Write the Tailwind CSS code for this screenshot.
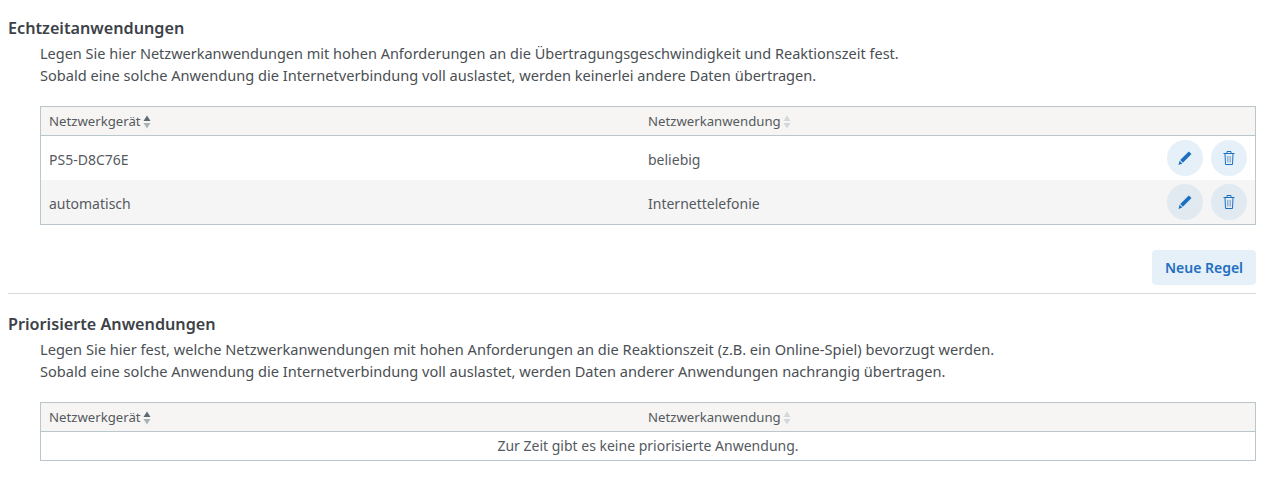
<!DOCTYPE html>
<html lang="de">
<head>
  <meta charset="UTF-8" />
  <title>Priorisierung</title>
  <script src="https://cdn.jsdelivr.net/npm/@tailwindcss/browser@4"></script>
</head>
<body class="bg-white text-[#555a5f] font-['Noto_Sans',sans-serif] text-[14px] overflow-hidden">
  <main class="w-[1276px] pl-2 pr-5 pt-[17px]">

    <!-- Echtzeitanwendungen -->
    <h2 class="h-[22px] leading-[22px] text-[16.2px] font-semibold text-[#3c4248]">Echtzeitanwendungen</h2>
    <div class="pl-8 pt-[3px] leading-[22px] text-[14.6px] text-[#4a4f54]">
      <p class="text-[14.5px]">Legen Sie hier Netzwerkanwendungen mit hohen Anforderungen an die Übertragungsgeschwindigkeit und Reaktionszeit fest.</p>
      <p>Sobald eine solche Anwendung die Internetverbindung voll auslastet, werden keinerlei andere Daten übertragen.</p>
    </div>

    <div class="ml-8 mt-[20px] border border-[#b9c6ce]">
      <div class="flex h-[29px] pt-[2px] items-center bg-[#f6f5f3] border-b border-[#b9c6ce] text-[13.2px]">
        <div class="w-[607px] pl-2 flex items-center gap-0.5">Netzwerkgerät
          <svg width="8" height="16" viewBox="0 0 8 16"><path d="M4 1.5l3.5 5.5h-7z" fill="#5f6871"/><path d="M4 14.5L7.5 9h-7z" fill="#a9b3ba"/></svg>
        </div>
        <div class="flex items-center gap-0.5">Netzwerkanwendung
          <svg width="8" height="16" viewBox="0 0 8 16"><path d="M4 1.5l3.5 5.5h-7z" fill="#d3d8dc"/><path d="M4 14.5L7.5 9h-7z" fill="#d3d8dc"/></svg>
        </div>
      </div>
      <div class="flex h-[44px] items-center">
        <div class="w-[607px] pl-2 pt-[2px]">PS5-D8C76E</div>
        <div class="flex-1 pt-[2px]">beliebig</div>
        <div class="flex gap-2 pr-2">
          <button class="w-9 h-9 rounded-full bg-[#e6f0f8] flex items-center justify-center">
            <svg width="14" height="15" viewBox="0 0 14 15"><path d="M10.8.5l2.7 2.6-8.6 8.7-2.7-2.7z M1.6 9.7l2.7 2.7L.5 14z" fill="#1e6fc0"/></svg>
          </button>
          <button class="w-9 h-9 rounded-full bg-[#e6f0f8] flex items-center justify-center">
            <svg width="14" height="16" viewBox="0 0 14 16" fill="none" stroke="#1e6fc0"><path d="M1.5 3.5h11M5 3.5V1.5h4v2M3 3.5l.5 11h7l.5-11"/><path d="M5.5 6v6.5M7 6v6.5M8.5 6v6.5" stroke="#8fb4da"/></svg>
          </button>
        </div>
      </div>
      <div class="flex h-[44px] items-center bg-[#f5f5f5]">
        <div class="w-[607px] pl-2 pt-[2px]">automatisch</div>
        <div class="flex-1 pt-[2px]">Internettelefonie</div>
        <div class="flex gap-2 pr-2">
          <button class="w-9 h-9 rounded-full bg-[#e1eaf1] flex items-center justify-center">
            <svg width="14" height="15" viewBox="0 0 14 15"><path d="M10.8.5l2.7 2.6-8.6 8.7-2.7-2.7z M1.6 9.7l2.7 2.7L.5 14z" fill="#1e6fc0"/></svg>
          </button>
          <button class="w-9 h-9 rounded-full bg-[#e1eaf1] flex items-center justify-center">
            <svg width="14" height="16" viewBox="0 0 14 16" fill="none" stroke="#1e6fc0"><path d="M1.5 3.5h11M5 3.5V1.5h4v2M3 3.5l.5 11h7l.5-11"/><path d="M5.5 6v6.5M7 6v6.5M8.5 6v6.5" stroke="#8fb4da"/></svg>
          </button>
        </div>
      </div>
    </div>

    <div class="flex justify-end mt-[25px]">
      <button class="h-[35px] w-[104px] rounded bg-[#e6f0f8] text-[#1e6fc0] font-semibold text-[14px]">Neue Regel</button>
    </div>

    <hr class="mt-2 border-[#d5dbdf]" />

    <!-- Priorisierte Anwendungen -->
    <h2 class="mt-[19px] h-[22px] leading-[22px] text-[16.2px] font-semibold text-[#3c4248]">Priorisierte Anwendungen</h2>
    <div class="pl-8 pt-[3px] leading-[22px] text-[14.6px] text-[#4a4f54]">
      <p>Legen Sie hier fest, welche Netzwerkanwendungen mit hohen Anforderungen an die Reaktionszeit (z.B. ein Online-Spiel) bevorzugt werden.</p>
      <p>Sobald eine solche Anwendung die Internetverbindung voll auslastet, werden Daten anderer Anwendungen nachrangig übertragen.</p>
    </div>

    <div class="ml-8 mt-[20px] border border-[#b9c6ce]">
      <div class="flex h-[29px] pt-[2px] items-center bg-[#f6f5f3] border-b border-[#b9c6ce] text-[13.2px]">
        <div class="w-[607px] pl-2 flex items-center gap-0.5">Netzwerkgerät
          <svg width="8" height="16" viewBox="0 0 8 16"><path d="M4 1.5l3.5 5.5h-7z" fill="#5f6871"/><path d="M4 14.5L7.5 9h-7z" fill="#a9b3ba"/></svg>
        </div>
        <div class="flex items-center gap-0.5">Netzwerkanwendung
          <svg width="8" height="16" viewBox="0 0 8 16"><path d="M4 1.5l3.5 5.5h-7z" fill="#d3d8dc"/><path d="M4 14.5L7.5 9h-7z" fill="#d3d8dc"/></svg>
        </div>
      </div>
      <div class="h-[28px] leading-[28px] text-center">Zur Zeit gibt es keine priorisierte Anwendung.</div>
    </div>
  </main>
</body>
</html>
